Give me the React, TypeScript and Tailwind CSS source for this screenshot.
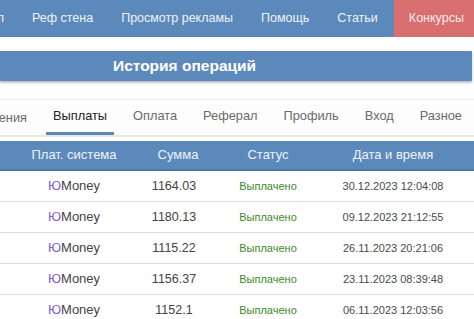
import type { ReactNode } from 'react';

const navItems = ['Реф стена', 'Просмотр рекламы', 'Помощь', 'Статьи'];
const tabs = ['Выплаты', 'Оплата', 'Реферал', 'Профиль', 'Вход', 'Разное'];

const rows = [
  { sum: '1164.03', date: '30.12.2023 12:04:08' },
  { sum: '1180.13', date: '09.12.2023 21:12:55' },
  { sum: '1115.22', date: '26.11.2023 20:21:06' },
  { sum: '1156.37', date: '23.11.2023 08:39:48' },
  { sum: '1152.1', date: '06.11.2023 12:03:56' },
];

const cols = 'grid grid-cols-[146px_56px_128px_126px]';

function Cell({ children, className = '' }: { children: ReactNode; className?: string }) {
  return <div className={`flex items-center justify-center whitespace-nowrap ${className}`}>{children}</div>;
}

export default function App() {
  return (
    <div className="w-[474px] h-[319px] overflow-hidden bg-white font-['Liberation_Sans',Arial,sans-serif]">
      {/* top menu */}
      <div className="flex h-[37px] items-center overflow-hidden bg-[#5c89bb] text-[12.5px] text-[#eef3f9]">
        <div className="flex w-[4px] shrink-0 justify-end overflow-hidden whitespace-nowrap">Портал</div>
        <div className="ml-[14px] flex h-full shrink-0 items-center">
          {navItems.map((item) => (
            <span key={item} className="px-[14px] whitespace-nowrap">{item}</span>
          ))}
        </div>
        <div className="ml-[2px] flex h-full flex-1 items-center bg-[#d96e6f] pl-[15px] whitespace-nowrap text-[#fbeaea]">Конкурсы</div>
      </div>

      {/* title */}
      <div className="mt-[14px] flex h-[30px] w-[472px] items-center bg-[#5c89bb] pl-[113px] text-[15.5px] font-bold text-white shadow-[0_2px_2px_rgba(0,0,0,0.25)]">
        История операций
      </div>

      {/* tabs */}
      <div className="mt-[18px] flex h-[38px] items-end overflow-hidden border-t border-[#eeeeee] border-b-2 border-b-[#ebe8de] bg-[#fdfdfd] text-[12.8px] text-[#6b6b6b]">
        <div className="flex h-full w-[27px] shrink-0 items-center justify-end overflow-hidden whitespace-nowrap">Начисления</div>
        <div className="ml-[13px] flex h-full shrink-0">
          {tabs.map((tab, i) => (
            <div key={tab} className="flex h-full flex-col">
              <span className={`flex flex-1 items-center px-[13px] whitespace-nowrap ${i === 0 ? 'text-[#222]' : ''}`}>{tab}</span>
              <div className={`mx-[6px] h-[3px] ${i === 0 ? 'bg-[#5c89bb]' : ''}`} />
            </div>
          ))}
        </div>
      </div>

      {/* table */}
      <div className="mt-[4px]">
        <div className={`${cols} h-[30px] border-b-2 border-[#4b78a8] bg-[#5c89bb] text-[13px] text-[#eef3f9]`}>
          <Cell className="pl-[2px]">Плат. система</Cell>
          <Cell className="pl-[8px]">Сумма</Cell>
          <Cell className="pl-[4px]">Статус</Cell>
          <Cell>Дата и время</Cell>
        </div>
        {rows.map((r) => (
          <div key={r.date} className={`${cols} h-[31px] border-b border-[#dddddd]`}>
            <Cell className="pl-[2px] text-[13px] text-[#444]">
              <span className="text-[#8258e6]">Ю</span>Money
            </Cell>
            <Cell className="text-[12.5px] text-[#444]">{r.sum}</Cell>
            <Cell className="pl-[4px] text-[11px] text-[#3d8a2c]">Выплачено</Cell>
            <Cell className="text-[11px] text-[#4a4a4a]">{r.date}</Cell>
          </div>
        ))}
      </div>
    </div>
  );
}
